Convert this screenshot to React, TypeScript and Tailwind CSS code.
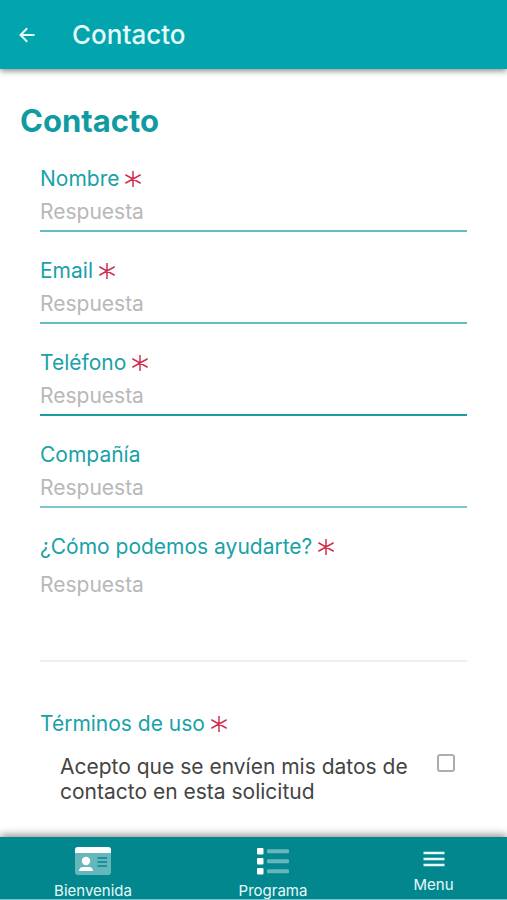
import React from 'react';

const fields = [
  { id: 'nombre', label: 'Nombre', type: 'text', required: true, line: 'border-[#62bcc3]' },
  { id: 'email', label: 'Email', type: 'email', required: true, line: 'border-[#62bcc3]' },
  { id: 'telefono', label: 'Teléfono', type: 'tel', required: true, line: 'border-[#1a9ea3]' },
  { id: 'compania', label: 'Compañía', type: 'text', required: false, line: 'border-[#7fc4ca]' },
];

function Asterisk() {
  return (
    <svg viewBox="0 0 16 16" className="w-4 h-4 shrink-0" fill="none" stroke="#d0304f" strokeWidth="1.5" strokeLinecap="round" aria-hidden="true">
      <path d="M8 0.5v15M0.8 4l14.4 8M15.2 4l-14.4 8" />
    </svg>
  );
}

function FieldLabel({ htmlFor, text, required }: { htmlFor: string; text: string; required?: boolean }) {
  return (
    <label htmlFor={htmlFor} className="flex items-center gap-1.5 h-7 text-[21px] leading-7 text-[#18a2a8]">
      {text}
      {required && <Asterisk />}
    </label>
  );
}

function CardIcon() {
  return (
    <svg viewBox="0 0 36 28" className="w-9 h-7" aria-hidden="true">
      <rect width="36" height="28" rx="3" fill="#66b7bc" />
      <path d="M0 6V3a3 3 0 0 1 3-3h30a3 3 0 0 1 3 3v3z" fill="#fff" />
      <circle cx="11" cy="14" r="4.2" fill="#fff" />
      <path d="M4 24c0-2.6 1.8-4 4-4h6c2.2 0 4 1.4 4 4z" fill="#fff" />
      <path d="M22.5 11h9.5M22.5 15h9.5M22.5 19h9.5" stroke="#03878f" strokeWidth="1.6" />
    </svg>
  );
}

function ListIcon() {
  return (
    <svg viewBox="0 0 32 28" className="w-8 h-7" aria-hidden="true">
      <g fill="#fff">
        <rect x="0" y="1" width="6.5" height="6.5" rx="1" />
        <rect x="0" y="11" width="6.5" height="6.5" rx="1" />
        <rect x="0" y="21" width="6.5" height="6.5" rx="1" />
      </g>
      <g fill="#66b7bc">
        <rect x="10" y="2.2" width="22" height="4" rx="1.2" />
        <rect x="10" y="12.2" width="22" height="4" rx="1.2" />
        <rect x="10" y="22.2" width="22" height="4" rx="1.2" />
      </g>
    </svg>
  );
}

function MenuIcon() {
  return (
    <svg viewBox="0 0 22 16" className="w-[22px] h-4" stroke="#e6fbfb" strokeWidth="2.4" aria-hidden="true">
      <path d="M0.5 2h21M0.5 8h21M0.5 14h21" />
    </svg>
  );
}

export default function App() {
  return (
    <div className="min-h-screen flex flex-col bg-white font-['Inter',sans-serif]">
      <header className="sticky top-0 z-10 flex items-center h-[69px] bg-[#02a5ae] text-[#e6fbfb] shadow-[0_2px_6px_rgba(0,0,0,0.45)]">
        <button type="button" aria-label="Volver" className="w-[54px] h-full flex items-center justify-center">
          <svg viewBox="0 0 16 16" className="w-4 h-4" fill="none" stroke="currentColor" strokeWidth="2" aria-hidden="true">
            <path d="M15.5 8H1.8M8.2 1.3L1.5 8l6.7 6.7" />
          </svg>
        </button>
        <h1 className="pl-[18px] text-[26px] leading-8 font-medium">Contacto</h1>
      </header>

      <main className="flex-1 pt-9 pb-8">
        <h2 className="px-5 text-[31px] leading-8 font-bold text-[#109ba2]">Contacto</h2>

        <form className="pt-7 px-10">
          <div className="flex flex-col gap-[25px]">
            {fields.map((field) => (
              <div key={field.id}>
                <FieldLabel htmlFor={field.id} text={field.label} required={field.required} />
                <input
                  id={field.id}
                  type={field.type}
                  placeholder="Respuesta"
                  className={`block w-full h-[39px] border-b-2 outline-none text-[21px] text-[#444] placeholder:text-[#b8b8b8] ${field.line}`}
                />
              </div>
            ))}
            <div>
              <FieldLabel htmlFor="ayuda" text="¿Cómo podemos ayudarte?" required />
              <textarea
                id="ayuda"
                placeholder="Respuesta"
                className="block w-full h-[101px] pt-2.5 border-b-2 border-[#efefef] outline-none resize-none text-[21px] leading-7 text-[#444] placeholder:text-[#b8b8b8]"
              />
            </div>
          </div>

          <div className="pt-12">
            <FieldLabel htmlFor="terminos" text="Términos de uso" required />
            <div className="flex items-start justify-between gap-4 pt-4 pl-5 pr-3">
              <label htmlFor="terminos" className="text-[21px] leading-[25px] text-[#444]">
                Acepto que se envíen mis datos de contacto en esta solicitud
              </label>
              <input
                id="terminos"
                type="checkbox"
                className="appearance-none shrink-0 w-[18px] h-[18px] border-2 border-[#adadad] rounded-[3px] checked:bg-[#02a5ae]"
              />
            </div>
          </div>
        </form>
      </main>

      <nav className="sticky bottom-0 grid grid-cols-[186fr_174fr_147fr] h-[63px] bg-[#03878f] border-b border-[#7cc3c8] text-[#e6fbfb] text-[15px] leading-4 shadow-[0_-2px_8px_rgba(0,0,0,0.45)]">
        <a href="#bienvenida" className="flex flex-col items-center gap-2 pt-2.5">
          <CardIcon />
          Bienvenida
        </a>
        <a href="#programa" className="flex flex-col items-center gap-2 pt-2.5">
          <ListIcon />
          Programa
        </a>
        <button type="button" className="flex flex-col items-center gap-2.5 pt-3.5">
          <MenuIcon />
          Menu
        </button>
      </nav>
    </div>
  );
}
